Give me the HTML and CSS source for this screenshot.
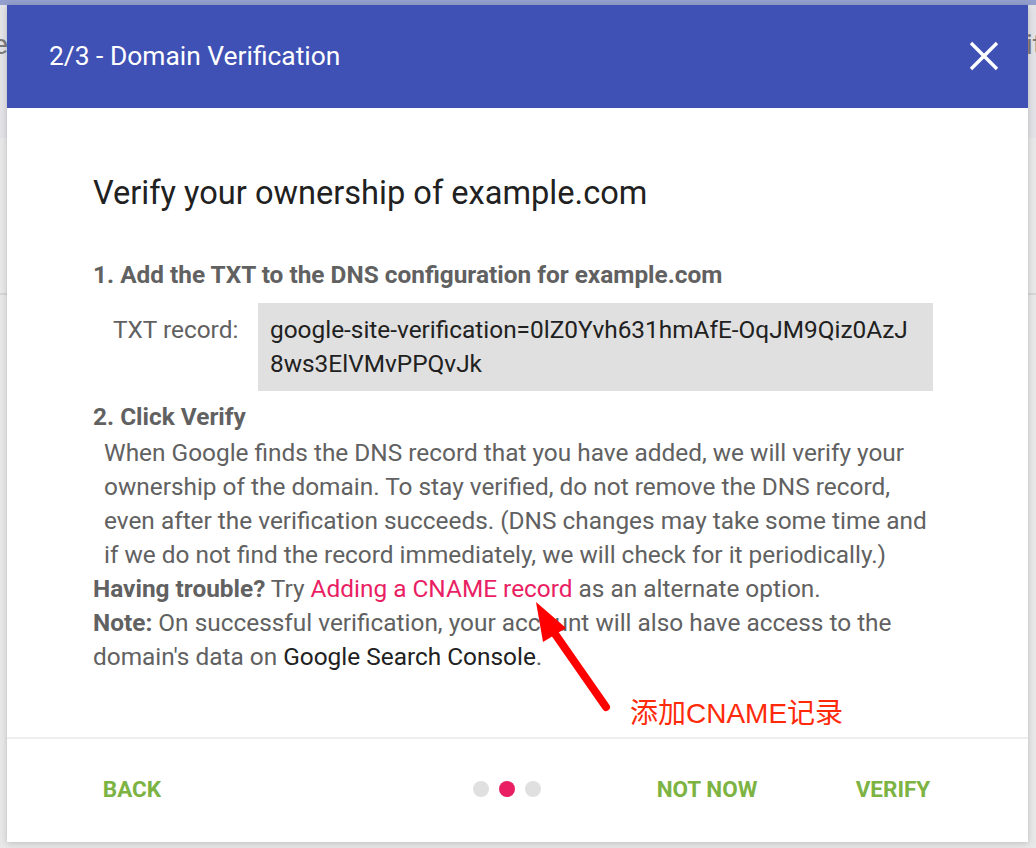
FILE: index.html
```html
<!DOCTYPE html>
<html lang="en">
<head>
<meta charset="utf-8">
<title>Domain Verification</title>
<link rel="stylesheet" href="styles.css">
</head>
<body>
<div class="page">
  <div class="page-topbar"></div>
  <div class="page-band">
    <span class="bg-text bg-left">e</span>
    <span class="bg-text bg-right">it</span>
  </div>
  <div class="page-row">
    <span class="bg-num">5</span>
  </div>
</div>

<div class="dialog">
  <header class="dialog-header">
    <h1 class="dialog-title">2/3 - Domain Verification</h1>
    <button class="close-btn" aria-label="Close">
      <svg width="32" height="32" viewBox="0 0 32 32"><path d="M3 3 L29 29 M29 3 L3 29" stroke="#fff" stroke-width="3.4" fill="none"/></svg>
    </button>
  </header>
  <main class="dialog-body">
    <h2 class="verify-title">Verify your ownership of example.com</h2>
    <div class="step-title">1. Add the TXT to the DNS configuration for example.com</div>
    <div class="txt-row">
      <div class="txt-label">TXT record:</div>
      <div class="txt-box">google-site-verification=0lZ0Yvh631hmAfE-OqJM9Qiz0AzJ 8ws3ElVMvPPQvJk</div>
    </div>
    <div class="step-title step2">2. Click Verify</div>
    <p class="step-text">When Google finds the DNS record that you have added, we will verify your ownership of the domain. To stay verified, do not remove the DNS record, even after the verification succeeds. (DNS changes may take some time and if we do not find the record immediately, we will check for it periodically.)</p>
    <p class="info"><b>Having trouble?</b> Try <a class="link">Adding a CNAME record</a> as an alternate option.</p>
    <p class="info"><b>Note:</b> On successful verification, your account will also have access to the domain's data on <span class="dark">Google Search Console</span>.</p>
  </main>
  <footer class="dialog-footer">
    <button class="btn btn-back">BACK</button>
    <div class="dots"><span class="dot"></span><span class="dot active"></span><span class="dot"></span></div>
    <button class="btn btn-notnow">NOT NOW</button>
    <button class="btn btn-verify">VERIFY</button>
  </footer>
</div>

<div class="annotation">
  <svg class="arrow" width="100" height="120" viewBox="0 0 100 120">
    <path d="M86 107 L33 31" stroke="#ff0000" stroke-width="8" stroke-linecap="round" fill="none"/>
    <path d="M16 2 L23 42 L46 28 Z" fill="#ff0000"/>
  </svg>
  <span class="note-label">添加CNAME记录</span>
</div>
</body>
</html>
```
FILE: styles.css
```css
* { box-sizing: border-box; }
html, body { margin: 0; padding: 0; }
body {
  width: 1036px;
  height: 848px;
  overflow: hidden;
  position: relative;
  background: #e8e8e8;
  font-family: Roboto, "Noto Sans", Arial, sans-serif;
}
.page { width: 1036px; height: 848px; }
.page-topbar { height: 5px; background: #959fce; }
.page-band {
  height: 133px;
  background: #e2e2e7;
  display: flex;
  justify-content: space-between;
  align-items: center;
  padding-bottom: 54px;
  overflow: hidden;
}
.bg-text { font-size: 28px; color: #7a7a7a; }
.bg-left { margin-left: -7px; }
.bg-right { margin-right: -6px; }
.page-row {
  height: 157px;
  border-bottom: 2px solid #d6d6d6;
  display: flex;
  justify-content: flex-end;
  align-items: flex-end;
  overflow: hidden;
}
.bg-num { font-size: 24px; color: #a8a8a8; margin-right: -8px; margin-bottom: -88px; }

.dialog {
  position: absolute;
  left: 7px;
  top: 5px;
  width: 1021px;
  height: 837px;
  background: #fff;
  box-shadow: 0 2px 8px rgba(0,0,0,0.12), 0 0 4px rgba(0,0,0,0.08);
  display: flex;
  flex-direction: column;
}
.dialog-header {
  height: 103px;
  background: #3f51b5;
  display: flex;
  align-items: center;
  justify-content: space-between;
  padding: 0 28px 0 42px;
  flex-shrink: 0;
}
.dialog-title {
  margin: 0;
  font-size: 26.4px;
  font-weight: 400;
  color: #fff;
  line-height: 32px;
  margin-top: -2px;
}
.close-btn {
  border: 0;
  background: none;
  padding: 0;
  width: 32px;
  height: 32px;
  margin-top: -2px;
}
.close-btn svg { display: block; }

.dialog-body {
  flex: 1;
  padding: 68px 94px 0 86px;
  color: #616161;
  font-size: 24.4px;
  line-height: 34px;
}
.verify-title {
  margin: 0 0 48px;
  font-size: 32.6px;
  font-weight: 400;
  color: #212121;
  line-height: 34px;
}
.step-title { font-weight: 700; }
.txt-row {
  display: flex;
  margin-top: 11px;
}
.txt-label {
  width: 165px;
  padding: 10px 0 0 20px;
  white-space: nowrap;
}
.txt-box {
  width: 675px;
  background: #e0e0e0;
  color: #212121;
  padding: 10px 12px;
}
.step2 { margin-top: 9px; }
.step-text { margin: 2px 0 0; padding-left: 11px; }
.info { margin: 0; }
.info b { font-weight: 700; }
.link { color: #e91e63; text-decoration: none; }
.dark { color: #212121; }

.dialog-footer {
  height: 105px;
  border-top: 2px solid #eeeeee;
  display: flex;
  align-items: center;
  flex-shrink: 0;
  padding: 0 0 3px 75px;
}
.btn {
  border: 0;
  background: none;
  width: 100px;
  padding: 0;
  font-family: Roboto, Arial, sans-serif;
  font-weight: 700;
  font-size: 22.5px;
  color: #7cb342;
  text-align: center;
  white-space: nowrap;
}
.dots { display: flex; gap: 10px; margin-left: 291px; }
.dot { width: 16px; height: 16px; border-radius: 50%; background: #e0e0e0; }
.dot.active { background: #e91e63; }
.btn-notnow { width: 120px; margin-left: 106px; }
.btn-verify { margin-left: 76px; }

.annotation {
  position: absolute;
  left: 520px;
  top: 600px;
  width: 340px;
  height: 140px;
}
.arrow { position: absolute; left: 0; top: 0; }
.note-label {
  position: absolute;
  left: 110px;
  top: 98px;
  font-family: Arial, "Liberation Sans", "Noto Sans CJK SC", sans-serif;
  font-size: 28px;
  line-height: 32px;
  color: #ff2a0a;
  white-space: nowrap;
}
```
